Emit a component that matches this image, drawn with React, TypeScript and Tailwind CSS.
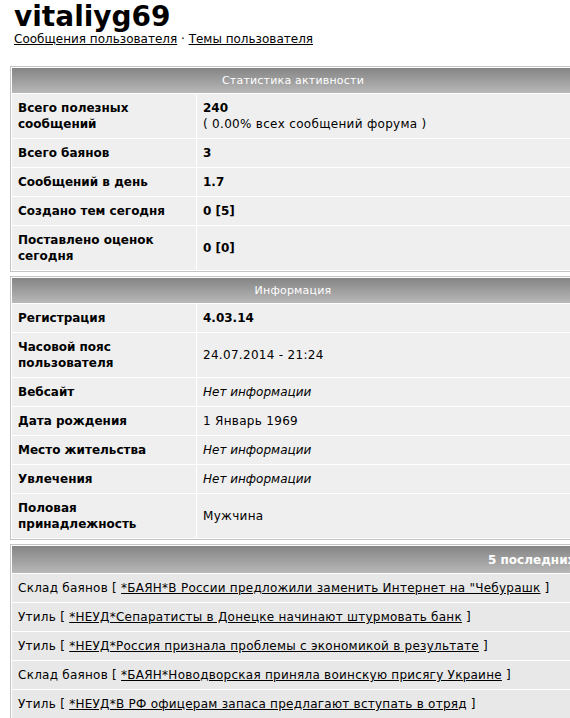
import React from "react"

type Row = {
    label: string
    value: React.ReactNode
}

// plain (upright, non-bold) values run a little wider than the bold ones
const Plain = ({ children }: { children: React.ReactNode }) => (
    <span className="tracking-[0.3px]">{children}</span>
)

const statRows: Row[] = [
    {
        label: "Всего полезных сообщений",
        value: (
            <>
                <b>240</b>
                <br />
                <Plain>( 0.00% всех сообщений форума )</Plain>
            </>
        ),
    },
    { label: "Всего баянов", value: <b>3</b> },
    { label: "Сообщений в день", value: <b>1.7</b> },
    { label: "Создано тем сегодня", value: <b>0 [5]</b> },
    { label: "Поставлено оценок сегодня", value: <b>0 [0]</b> },
]

const infoRows: Row[] = [
    { label: "Регистрация", value: <b>4.03.14</b> },
    { label: "Часовой пояс пользователя", value: <Plain>24.07.2014 - 21:24</Plain> },
    { label: "Вебсайт", value: <i>Нет информации</i> },
    { label: "Дата рождения", value: <Plain>1 Январь 1969</Plain> },
    { label: "Место жительства", value: <i>Нет информации</i> },
    { label: "Увлечения", value: <i>Нет информации</i> },
    { label: "Половая принадлежность", value: <Plain>Мужчина</Plain> },
]

const topics = [
    { forum: "Склад баянов", title: "*БАЯН*В России предложили заменить Интернет на \"Чебурашк" },
    { forum: "Утиль", title: "*НЕУД*Сепаратисты в Донецке начинают штурмовать банк" },
    { forum: "Утиль", title: "*НЕУД*Россия признала проблемы с экономикой в результате" },
    { forum: "Склад баянов", title: "*БАЯН*Новодворская приняла воинскую присягу Украине" },
    { forum: "Утиль", title: "*НЕУД*В РФ офицерам запаса предлагают вступать в отряд" },
]

const InfoTable = ({ title, rows }: { title: string; rows: Row[] }) => (
    <table className="w-[566px] border border-[#c4c4c4] border-separate border-spacing-[1px] bg-white">
        <thead>
            <tr>
                <th
                    colSpan={2}
                    className="h-[25px] bg-gradient-to-b from-[#858585] to-[#b8b8b8] text-center text-white text-[11px] font-normal tracking-[0.2px]"
                >
                    {title}
                </th>
            </tr>
        </thead>
        <tbody>
            {rows.map((row) => (
                <tr key={row.label}>
                    <td className="w-[184px] bg-[#efefef] p-[6px] align-middle font-bold">
                        {row.label}
                    </td>
                    <td className="bg-[#efefef] p-[6px] align-middle">{row.value}</td>
                </tr>
            ))}
        </tbody>
    </table>
)

export default function App() {
    return (
        <div className="w-[570px] h-[718px] overflow-hidden bg-white pt-[2px] text-black text-[12px] leading-[16px] font-['DejaVu_Sans',Verdana,sans-serif]">
            <div className="pl-[14px]">
                <h1 className="text-[28px] leading-[30px] font-bold">vitaliyg69</h1>
                <div className="-mt-[1px]">
                    <a className="underline" href="#">Сообщения пользователя</a>
                    {" · "}
                    <a className="underline" href="#">Темы пользователя</a>
                </div>
            </div>

            <div className="mt-[19px] pl-[10px] flex flex-col gap-[4px]">
                <InfoTable title="Статистика активности" rows={statRows} />
                <InfoTable title="Информация" rows={infoRows} />

                <table className="w-[1172px] border border-[#c4c4c4] border-separate border-spacing-[1px] bg-white">
                    <thead>
                        <tr>
                            <th className="h-[27px] bg-gradient-to-b from-[#858585] to-[#b8b8b8] text-center text-white font-bold">
                                5 последних тем пользователя
                            </th>
                        </tr>
                    </thead>
                    <tbody>
                        {topics.map((t, i) => (
                            <tr key={i}>
                                <td className="bg-[#e8e8e8] p-[6px] whitespace-nowrap tracking-[0.25px]">
                                    {t.forum} [ <a className="underline" href="#">{t.title}</a> ]
                                </td>
                            </tr>
                        ))}
                    </tbody>
                </table>
            </div>
        </div>
    )
}
